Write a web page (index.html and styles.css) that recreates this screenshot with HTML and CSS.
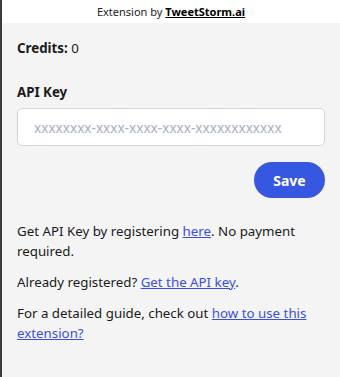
FILE: index.html
```html
<!DOCTYPE html>
<html lang="en">
<head>
    <meta charset="UTF-8">
    <meta name="viewport" content="width=device-width, initial-scale=1.0">
    <title>TweetStorm Extension</title>
    <link rel="stylesheet" href="styles.css">
</head>
<body>

<header class="topbar">
    Extension by <a href="#" class="brand">TweetStorm.ai</a>
</header>

<main class="panel">
    <div class="credits"><strong>Credits:</strong> 0</div>

    <form class="key-form" onsubmit="return false">
        <label for="api-key" class="key-label">API Key</label>
        <input type="text" id="api-key" class="key-input" placeholder="xxxxxxxx-xxxx-xxxx-xxxx-xxxxxxxxxxxx">
        <div class="actions">
            <button type="submit" class="save-btn">Save</button>
        </div>
    </form>

    <p class="info">Get API Key by registering <a href="#">here</a>. No payment required.</p>
    <p class="info">Already registered? <a href="#">Get the API key</a>.</p>
    <p class="info">For a detailed guide, check out <a href="#">how to use this extension?</a></p>
</main>

</body>
</html>
```

FILE: styles.css
```css
body {
    font-family: "Noto Sans", "DejaVu Sans", sans-serif;
    margin: 0;
    padding: 0;
    background-color: #f4f4f4;
    color: #1a1a1a;
    border-left: 2px solid #3a3d40;
    min-height: 377px;
    box-sizing: border-box;
}

.topbar {
    background-color: white;
    height: 23px;
    line-height: 23px;
    text-align: center;
    font-size: 11px;
    color: #222;
}

.brand {
    color: black;
    font-weight: bold;
}

.panel {
    padding: 15px 15px 0 15px;
    font-size: 13.3px;
}

.credits {
    line-height: 20px;
}

.key-form {
    margin-top: 24px;
    display: flex;
    flex-direction: column;
}

.key-label {
    font-weight: bold;
    line-height: 20px;
    margin-bottom: 6px;
}

.key-input {
    height: 38px;
    box-sizing: border-box;
    padding: 0 16px;
    border: 1px solid #d0d4da;
    border-radius: 5px;
    background: white;
    font-family: inherit;
    font-size: 13.6px;
}

.key-input::placeholder {
    color: #a7b0c0;
}

.actions {
    display: flex;
    justify-content: flex-end;
    margin-top: 16px;
}

.save-btn {
    width: 71px;
    height: 36px;
    background-color: #3657e0;
    color: white;
    border: none;
    border-radius: 18px;
    font-family: inherit;
    font-size: 14px;
    font-weight: bold;
    cursor: pointer;
}

.info {
    margin: 0 0 11px 0;
    line-height: 20px;
}

.key-form + .info {
    margin-top: 23px;
}

.info a {
    color: #3a4fe0;
}
```
